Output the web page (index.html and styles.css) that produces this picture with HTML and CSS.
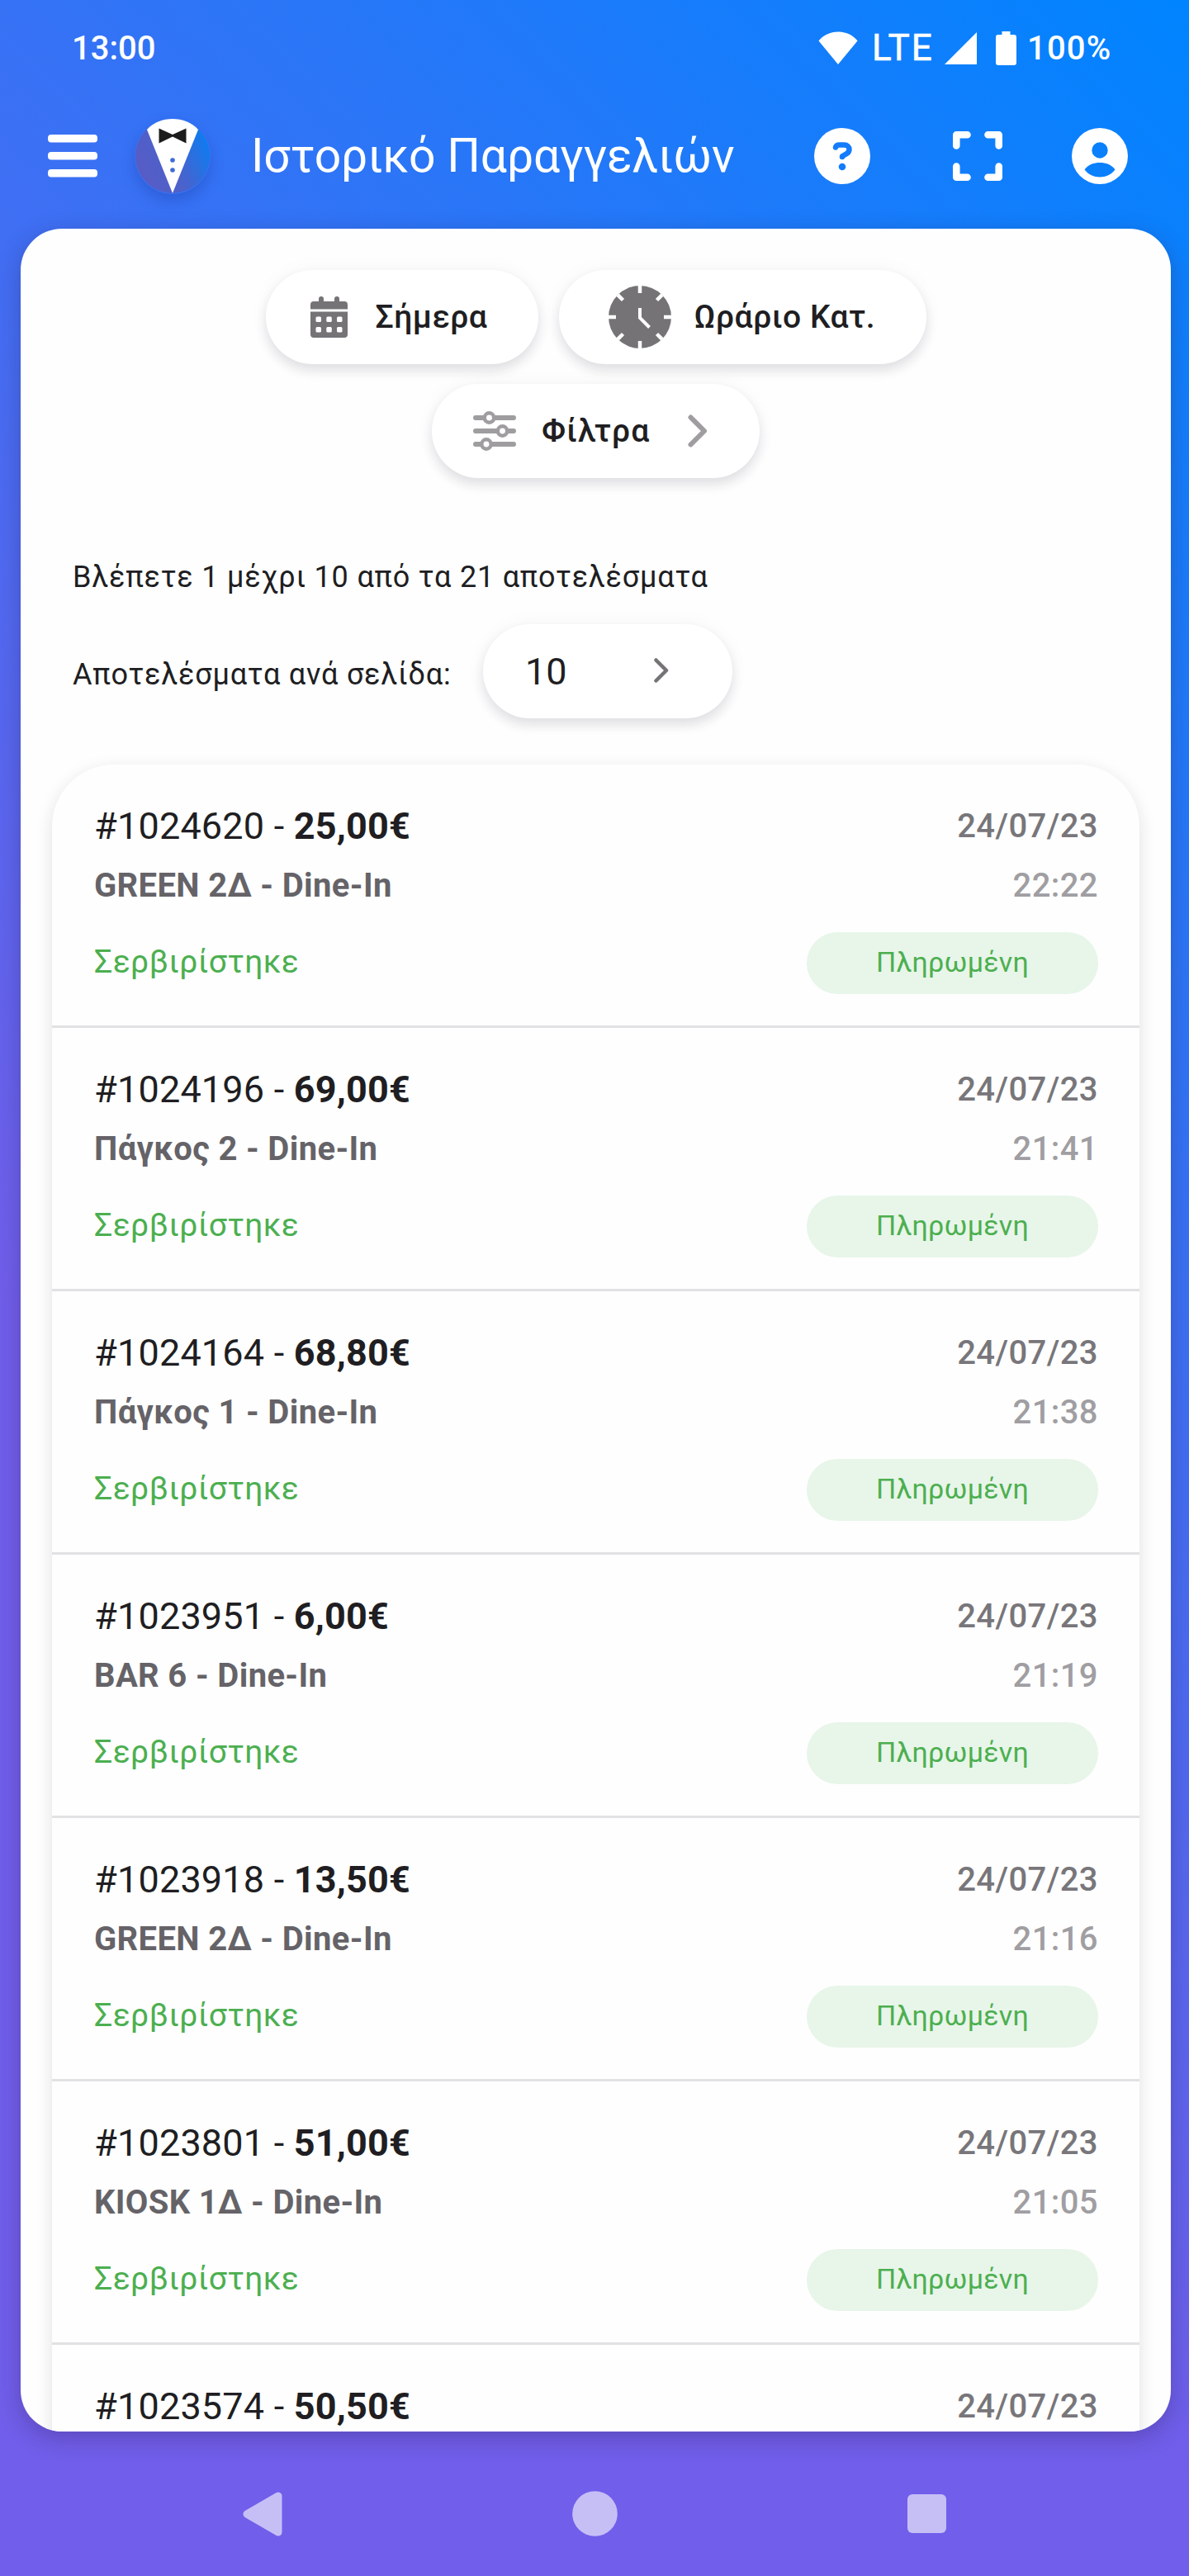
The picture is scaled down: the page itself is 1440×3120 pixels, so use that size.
FILE: index.html
```html
<!DOCTYPE html>
<html lang="el">
<head>
<meta charset="utf-8">
<title>Ιστορικό Παραγγελιών</title>
<link rel="stylesheet" href="styles.css">
</head>
<body>
<div class="screen">
  <div class="status">
    <span class="clock">13:00</span>
    <div class="indicators">
      <svg class="wifi" width="48" height="40" viewBox="0 0 48 40" fill="#fff"><path d="M24 40 .5 11.500C6 4.500 14.500.5 24 .5S42 4.500 47.500 11.500Z"/></svg>
      <span class="lte">LTE</span>
      <svg class="signal" width="39" height="39" viewBox="0 0 39 39" fill="#fff"><path d="M39 0V39H0Z"/></svg>
      <svg class="battery" width="25" height="41" viewBox="0 0 25 41" fill="#fff"><path d="M7.500 0h10v4H22a3 3 0 0 1 3 3v31a3 3 0 0 1-3 3H3a3 3 0 0 1-3-3V7a3 3 0 0 1 3-3h4.500Z"/></svg>
      <span class="percent">100%</span>
    </div>
  </div>

  <header class="appbar">
    <svg class="menu" width="60" height="52" viewBox="0 0 60 52" fill="#fff"><rect width="60" height="9.500" rx="4"/><rect y="21" width="60" height="9.500" rx="4"/><rect y="42" width="60" height="9.500" rx="4"/></svg>
    <svg class="logo" width="92" height="92" viewBox="0 0 92 92">
      <defs><linearGradient id="disc" x1="0" y1=".75" x2="1" y2=".3"><stop offset="0" stop-color="#5a5bc4"/><stop offset=".5" stop-color="#4a62cc"/><stop offset="1" stop-color="#0a7df2"/></linearGradient></defs>
      <circle cx="46" cy="46" r="45" fill="url(#disc)"/>
      <path d="M15 14C23 5 34 1 46 1s23 4 31 13L46 91Z" fill="#fff"/>
      <path d="M29.500 12.500 46 20l16.500-7.500v18L46 22.500l-16.500 8Z" fill="#1c1c1c"/>
      <circle cx="46" cy="51" r="2.800" fill="#3f6bd6"/><circle cx="46" cy="63" r="2.800" fill="#3f6bd6"/>
    </svg>
    <h1 class="title">Ιστορικό Παραγγελιών</h1>
    <svg class="help" width="68" height="68" viewBox="0 0 68 68"><circle cx="34" cy="34" r="34" fill="#fff"/><path d="M26 23.500C26.500 21.500 28.500 20.500 31 20.500h5.500c3.500 0 6 2.300 6 5.500 0 2.500-1.300 4-3.300 5.200L34 34.200v.8" fill="none" stroke="#147cfc" stroke-width="6.500" stroke-linecap="round" stroke-linejoin="round"/><circle cx="34" cy="47" r="4.300" fill="#147cfc"/></svg>
    <svg class="expand" width="60" height="60" viewBox="0 0 60 60" fill="none" stroke="#fff" stroke-width="8.600" stroke-linecap="round" stroke-linejoin="round"><path d="M4.300 17.500V4.300H17.500M42.500 4.300H55.700V17.500M55.700 42.500V55.700H42.500M17.500 55.700H4.300V42.500"/></svg>
    <svg class="account" width="68" height="68" viewBox="0 0 68 68"><circle cx="34" cy="34" r="34" fill="#fff"/><circle cx="34" cy="27" r="9.700" fill="#0a80fd"/><path d="M15.500 50.500C20 44 27 42 34 42s14 2 18.500 8.500C48 56.500 41 59.500 34 59.500S20 56.500 15.500 50.500Z" fill="#0a80fd"/></svg>
  </header>

  <main class="panel">
    <div class="filters">
      <button class="chip chip-day">
        <svg width="45" height="50" viewBox="0 0 45 50"><path d="M13 3v6M32 3v6" stroke="#757376" stroke-width="6" stroke-linecap="round"/><path d="M4 6h37a4 4 0 0 1 4 4v5.500H0V10a4 4 0 0 1 4-4ZM0 18.500h45V46a4 4 0 0 1-4 4H4a4 4 0 0 1-4-4Z" fill="#757376"/><g fill="#fff"><rect x="6.500" y="24.500" width="6.500" height="6.500" rx="1.500"/><rect x="19.300" y="24.500" width="6.500" height="6.500" rx="1.500"/><rect x="32" y="24.500" width="6.500" height="6.500" rx="1.500"/><rect x="6.500" y="37" width="6.500" height="6.500" rx="1.500"/><rect x="19.300" y="37" width="6.500" height="6.500" rx="1.500"/><rect x="32" y="37" width="6.500" height="6.500" rx="1.500"/></g></svg>
        <span>Σήμερα</span>
      </button>
      <button class="chip chip-hours">
        <svg width="76" height="76" viewBox="0 0 76 76"><circle cx="38" cy="38" r="38" fill="#757376"/><path d="M38 0v9M38 67v9M0 38h9M67 38h9M11.100 11.100l6.400 6.400M58.500 58.500l6.400 6.400M11.100 64.900l6.400-6.400M58.500 17.500l6.400-6.400" stroke="#fff" stroke-width="4.500"/><path d="M38 27V39L49.500 50.500" fill="none" stroke="#fff" stroke-width="4"/></svg>
        <span>Ωράριο Κατ.</span>
      </button>
      <button class="chip chip-filters">
        <svg width="52" height="48" viewBox="0 0 52 48"><path d="M3 8h46M3 24h46M3 40h46" stroke="#9f9da0" stroke-width="6" stroke-linecap="round"/><g fill="#fff" stroke="#9f9da0" stroke-width="4.500"><circle cx="19.500" cy="8" r="5.700"/><circle cx="35.500" cy="24" r="5.700"/><circle cx="16" cy="40" r="5.700"/></g></svg>
        <span>Φίλτρα</span>
        <svg class="chevron" width="24" height="40" viewBox="0 0 24 40"><path d="M3.500 3.500 20 20 3.500 36.500" fill="none" stroke="#9f9da0" stroke-width="6" stroke-linecap="round" stroke-linejoin="round"/></svg>
      </button>
    </div>

    <p class="summary">Βλέπετε 1 μέχρι 10 από τα 21 αποτελέσματα</p>
    <div class="perpage">
      <span class="perpage-label">Αποτελέσματα ανά σελίδα:</span>
      <button class="select"><span>10</span><svg width="18" height="30" viewBox="0 0 18 30"><path d="M2.500 2.500 15 15 2.500 27.500" fill="none" stroke="#757376" stroke-width="4.500" stroke-linecap="round" stroke-linejoin="round"/></svg></button>
    </div>

    <section class="orders">
      <article class="order"><div class="number">#1024620 - <b>25,00€</b></div><div class="date">24/07/23</div><div class="place">GREEN 2Δ - Dine-In</div><div class="time">22:22</div><div class="state">Σερβιρίστηκε</div><div class="badge">Πληρωμένη</div></article>
      <article class="order"><div class="number">#1024196 - <b>69,00€</b></div><div class="date">24/07/23</div><div class="place">Πάγκος 2 - Dine-In</div><div class="time">21:41</div><div class="state">Σερβιρίστηκε</div><div class="badge">Πληρωμένη</div></article>
      <article class="order"><div class="number">#1024164 - <b>68,80€</b></div><div class="date">24/07/23</div><div class="place">Πάγκος 1 - Dine-In</div><div class="time">21:38</div><div class="state">Σερβιρίστηκε</div><div class="badge">Πληρωμένη</div></article>
      <article class="order"><div class="number">#1023951 - <b>6,00€</b></div><div class="date">24/07/23</div><div class="place">BAR 6 - Dine-In</div><div class="time">21:19</div><div class="state">Σερβιρίστηκε</div><div class="badge">Πληρωμένη</div></article>
      <article class="order"><div class="number">#1023918 - <b>13,50€</b></div><div class="date">24/07/23</div><div class="place">GREEN 2Δ - Dine-In</div><div class="time">21:16</div><div class="state">Σερβιρίστηκε</div><div class="badge">Πληρωμένη</div></article>
      <article class="order"><div class="number">#1023801 - <b>51,00€</b></div><div class="date">24/07/23</div><div class="place">KIOSK 1Δ - Dine-In</div><div class="time">21:05</div><div class="state">Σερβιρίστηκε</div><div class="badge">Πληρωμένη</div></article>
      <article class="order order-last"><div class="number">#1023574 - <b>50,50€</b></div><div class="date">24/07/23</div></article>
    </section>
  </main>

  <nav class="sysnav">
    <svg width="48" height="54" viewBox="0 0 48 54"><path d="M43 5v44L5 27Z" fill="#c6bff6" stroke="#c6bff6" stroke-width="9" stroke-linejoin="round"/></svg>
    <svg width="55" height="55" viewBox="0 0 55 55"><circle cx="27.500" cy="27.500" r="27.300" fill="#c6bff6"/></svg>
    <svg width="47" height="47" viewBox="0 0 47 47"><rect width="47" height="47" rx="6" fill="#c6bff6"/></svg>
  </nav>
</div>
</body>
</html>
```
FILE: styles.css
```css
* { box-sizing: border-box; }
body { margin: 0; font-family: Roboto, "Noto Sans", sans-serif; color: #201e22; }
svg { display: block; flex: none; }
button { font: inherit; color: inherit; border: 0; background: #fff; }

.screen {
  width: 1440px;
  height: 3120px;
  display: flex;
  flex-direction: column;
  overflow: hidden;
  background: linear-gradient(225deg, #0084ff 0, #715eea 66%);
}

.status {
  height: 116px;
  padding: 0 94px 0 87px;
  display: flex;
  align-items: center;
  justify-content: space-between;
  color: #fff;
}
.clock, .percent { font-size: 40px; font-weight: 500; }
.percent { width: 102px; letter-spacing: 1.200px; }
.indicators { display: flex; align-items: center; }
.lte { font-size: 44px; letter-spacing: 1.800px; width: 84px; margin-left: 17px; -webkit-text-stroke: .6px #fff; }
.signal { margin-left: 4px; }
.battery { margin: 0 13px 0 23px; }

.appbar {
  height: 145px;
  margin-bottom: 16px;
  padding-left: 58px;
  display: flex;
  align-items: center;
  color: #fff;
}
.logo { margin-left: 45px; border-radius: 50%; box-shadow: 0 8px 16px rgba(20, 40, 130, .25); }
.title {
  width: 682px;
  margin: 0 0 0 49px;
  font-size: 57px;
  font-weight: 400;
  letter-spacing: -.170px;
  white-space: nowrap;
}
.expand { margin-left: 100px; }
.account { margin-left: 84px; }

.panel {
  width: 1393px;
  height: 2668px;
  margin-left: 25px;
  padding: 50px 38px 0;
  border-radius: 50px;
  overflow: hidden;
  background: #fefefe;
  box-shadow: 0 8px 28px rgba(40, 30, 80, .3);
}

.filters { display: flex; flex-wrap: wrap; justify-content: center; gap: 24px 25px; padding: 0 200px; }
.chip, .select {
  height: 114px;
  border-radius: 57px;
  display: flex;
  align-items: center;
  box-shadow: 0 8px 14px rgba(40, 30, 50, .12), 0 0 24px rgba(60, 30, 90, .04);
}
.chip { padding: 0; font-size: 39px; font-weight: 500; letter-spacing: .500px; white-space: nowrap; }
.chip-day { width: 330px; padding-left: 54px; gap: 34px; }
.chip-hours { width: 445px; padding-left: 60px; gap: 28px; }
.chip-filters { width: 397px; padding-left: 50px; gap: 31px; letter-spacing: 1px; }
.chevron { margin-left: 15px; }

.summary, .perpage { padding-left: 25px; font-size: 36px; letter-spacing: .800px; }
.summary { margin: 100px 0 37px; line-height: 40px; }
.perpage { display: flex; align-items: center; }
.perpage-label { width: 497px; padding-top: 7px; }
.select { width: 302px; padding: 0 77px 0 51px; justify-content: space-between; font-size: 45px; }
.select svg { margin-bottom: 2px; }

.orders {
  margin-top: 56px;
  border-radius: 75px 75px 0 0;
  background: #fefefe;
  box-shadow: 0 6px 20px rgba(40, 30, 50, .13);
}
.order {
  height: 319px;
  padding: 45px 50px 0 51px;
  display: grid;
  grid-template-columns: 1fr auto;
  grid-template-rows: 60px 60px 75px;
  row-gap: 12px;
  line-height: 60px;
  border-bottom: 3px solid #e2e1e4;
}
.order-last { border-bottom: 0; }
.number { font-size: 45px; letter-spacing: .200px; }
.date, .time { justify-self: end; font-size: 40px; font-weight: 500; letter-spacing: .400px; }
.date { color: #78767a; }
.time { color: #a09ea2; }
.place { font-size: 40px; font-weight: 700; letter-spacing: .350px; color: #656368; }
.state { margin-top: 14px; height: 75px; line-height: 72px; font-size: 39px; letter-spacing: .400px; color: #4caf50; }
.badge {
  width: 353px;
  height: 75px;
  margin-top: 14px;
  border-radius: 38px;
  line-height: 73px;
  font-size: 34px;
  letter-spacing: .200px;
  text-align: center;
  color: #4caf50;
  background: #e8f5e9;
}

.sysnav {
  height: 175px;
  padding: 49px 294px 25px;
  display: flex;
  align-items: center;
  justify-content: space-between;
}
```
